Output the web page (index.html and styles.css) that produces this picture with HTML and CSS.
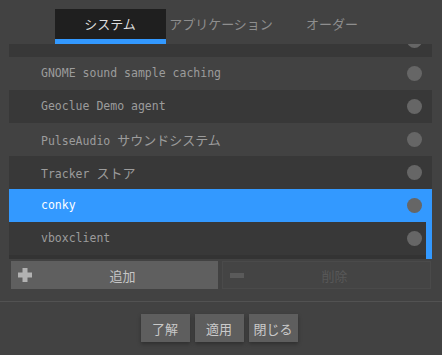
FILE: index.html
```html
<!DOCTYPE html>
<html lang="ja">

<head>
    <meta charset="UTF-8">
    <title>自動起動</title>
    <link rel="stylesheet" href="styles.css">
</head>

<body>
    <div class="tabs">
        <div class="tab active">システム</div>
        <div class="tab">アプリケーション</div>
        <div class="tab">オーダー</div>
    </div>

    <div class="list">
        <div class="rows">
            <div class="row dark"><span class="name"></span><span class="radio"></span></div>
            <div class="row"><span class="name">GNOME sound sample caching</span><span class="radio"></span></div>
            <div class="row dark"><span class="name">Geoclue Demo agent</span><span class="radio"></span></div>
            <div class="row"><span class="name">PulseAudio <span class="jp">サウンドシステム</span></span><span class="radio"></span></div>
            <div class="row dark"><span class="name">Tracker <span class="jp">ストア</span></span><span class="radio"></span></div>
            <div class="row selected"><span class="name">conky</span><span class="radio"></span></div>
            <div class="row dark"><span class="name">vboxclient</span><span class="radio"></span></div>
        </div>
        <div class="thumb"></div>
    </div>

    <div class="actions">
        <button class="action add">
            <svg width="14" height="14" viewBox="0 0 14 14"><path d="M4.5 0h5v4.5H14v5H9.5V14h-5V9.5H0v-5h4.5z" fill="#b2b2b2"/></svg>
            <span>追加</span>
        </button>
        <button class="action remove">
            <svg width="14" height="5" viewBox="0 0 14 5"><rect width="14" height="5" fill="#5a5a5a"/></svg>
            <span>削除</span>
        </button>
    </div>

    <div class="footer">
        <button class="dlg">了解</button>
        <button class="dlg">適用</button>
        <button class="dlg">閉じる</button>
    </div>
</body>

</html>
```

FILE: styles.css
```css
* {
    margin: 0;
    padding: 0;
    box-sizing: border-box;
}

body {
    width: 442px;
    height: 355px;
    overflow: hidden;
    background: #424242;
    font-family: "Noto Sans CJK JP", "Noto Sans", sans-serif;
    font-size: 13px;
}

.tabs {
    display: flex;
    justify-content: center;
    padding-top: 9px;
}

.tab {
    width: 111px;
    height: 35px;
    line-height: 30px;
    text-align: center;
    color: #8e8e8e;
}

.tab.active {
    background: #1f1f1f;
    border-bottom: 5px solid #3399ff;
    color: #dedede;
}

.list {
    position: relative;
    height: 215px;
    margin: 0 10px 0 9px;
    background: #333;
    overflow: hidden;
}

.rows {
    margin-top: -20px;
}

.row {
    display: flex;
    align-items: center;
    justify-content: space-between;
    height: 33px;
    padding: 0 10px 1px 32px;
    background: #424242;
    color: #9c9c9c;
    font-family: "DejaVu Sans Mono", "Noto Sans CJK JP", monospace;
    font-size: 11.5px;
}

.row.dark {
    background: #383838;
}

.row.selected {
    background: #3399ff;
    color: #fff;
}

.jp {
    font-size: 13px;
}

.radio {
    width: 15px;
    height: 15px;
    border-radius: 50%;
    background: #666;
}

.thumb {
    position: absolute;
    right: 0;
    bottom: 0;
    width: 6px;
    height: 37px;
    background: #3399ff;
}

.actions {
    display: flex;
    gap: 4px;
    margin: 2px 11px 0 11px;
}

.action {
    flex: 1;
    display: flex;
    align-items: center;
    height: 28px;
    padding: 0 7px;
    border: none;
    font-family: inherit;
    font-size: 13px;
    text-align: center;
}

.action span {
    flex: 1;
    padding-left: 2px;
}

.add {
    background: #5f5f5f;
    color: #c6c6c6;
}

.remove {
    background: #444;
    border: 1px solid #4a4a4a;
    color: #585858;
}

.footer {
    display: flex;
    justify-content: center;
    gap: 5px;
    margin-top: 12px;
    padding: 12px 4px 0 0;
    border-top: 1px solid #525252;
}

.dlg {
    width: 49px;
    height: 28px;
    border: none;
    background: #5e5e5e;
    color: #cacaca;
    font-family: inherit;
    font-size: 13px;
    box-shadow: 0 2px 4px rgba(0, 0, 0, 0.3);
}
```
